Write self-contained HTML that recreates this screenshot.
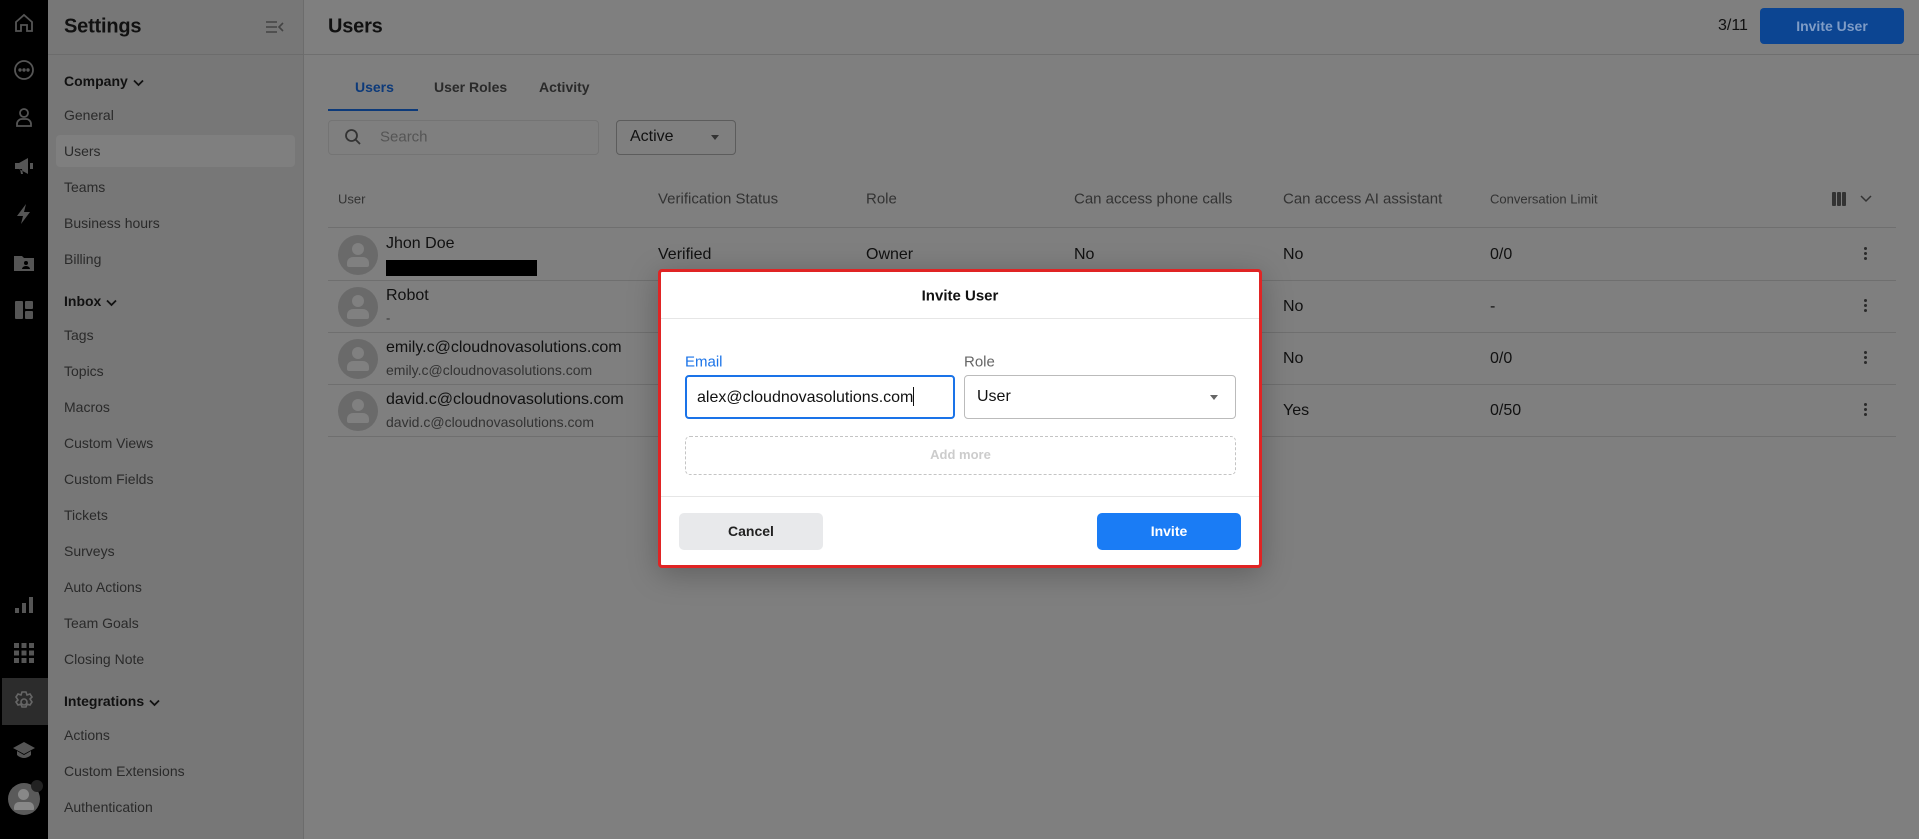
<!DOCTYPE html>
<html><head><meta charset="utf-8"><style>
*{box-sizing:border-box;margin:0;padding:0}
body{width:1919px;height:839px;overflow:hidden;font-family:"Liberation Sans",sans-serif;background:#7f7f7f;position:relative;color:#111}
.abs{position:absolute}
#rail{left:0;top:0;width:48px;height:839px;background:#000}
#side{left:48px;top:0;width:256px;height:839px;background:#777;border-right:1px solid #6c6c6c}
.it{position:absolute;left:16px;font-size:14px;color:#2a2a2a;transform:translateY(-50%)}
.hd{position:absolute;left:16px;font-size:14px;font-weight:bold;color:#111;transform:translateY(-50%)}
.hd svg{margin-left:5px;vertical-align:-1px}
.t{position:absolute;transform:translateY(-50%);white-space:nowrap}
.ic{position:absolute;left:12px;width:24px;height:24px}
.line{position:absolute;left:328px;width:1568px;height:1px;background:#6f6f6f}
.av{position:absolute;left:338px;width:40px;height:40px;border-radius:50%;background:#6a6a6a;overflow:hidden}
.av:before{content:"";position:absolute;left:14px;top:8px;width:12px;height:12px;border-radius:50%;background:#808080}
.av:after{content:"";position:absolute;left:9px;top:22px;width:22px;height:10px;border-radius:6px 6px 2px 2px;background:#808080}
.keb{position:absolute;left:1864px;width:4px}
.keb i{display:block;width:3px;height:3px;border-radius:50%;background:#2a2a2a;margin:0 0 2px}
</style></head><body>
<div id="rail" class="abs">
<svg class="ic" style="top:11px" viewBox="0 0 24 24" fill="none" stroke="#555" stroke-width="1.8"><path d="M4 11L12 4l8 7v9h-5v-6H9v6H4z"/></svg>
<svg class="ic" style="top:58px" viewBox="0 0 24 24" fill="none" stroke="#555" stroke-width="1.8"><circle cx="12" cy="12" r="9"/><circle cx="8" cy="12" r=".8" fill="#555"/><circle cx="12" cy="12" r=".8" fill="#555"/><circle cx="16" cy="12" r=".8" fill="#555"/></svg>
<svg class="ic" style="top:105px" viewBox="0 0 24 24" fill="none" stroke="#555" stroke-width="1.8"><circle cx="12" cy="8" r="4"/><path d="M5 21v-2a5 5 0 0 1 5-5h4a5 5 0 0 1 5 5v2z"/></svg>
<svg class="ic" style="top:154px" viewBox="0 0 24 24" fill="#555"><path d="M3 9h4l9-5v16l-9-5H3z M8 15l1 5h2l-1-5z M18 9h3v6h-3z"/></svg>
<svg class="ic" style="top:202px" viewBox="0 0 24 24" fill="#555"><path d="M14 2L5 14h6l-2 8 9-12h-6z"/></svg>
<svg class="ic" style="top:251px" viewBox="0 0 24 24" fill="#555"><path d="M2 5h8l2 2h10v13H2z"/><circle cx="14" cy="12" r="2" fill="#000"/><path d="M10 18a4 3 0 0 1 8 0z" fill="#000"/></svg>
<svg class="ic" style="top:298px" viewBox="0 0 24 24" fill="#555"><rect x="3" y="3" width="8" height="18" rx="1"/><rect x="13" y="3" width="8" height="8" rx="1"/><rect x="13" y="13" width="8" height="8" rx="1"/></svg>
<svg class="ic" style="top:593px" viewBox="0 0 24 24" fill="#555"><rect x="3" y="15" width="4" height="5"/><rect x="10" y="10" width="4" height="10"/><rect x="17" y="4" width="4" height="16"/></svg>
<svg class="ic" style="top:641px" viewBox="0 0 24 24" fill="#555"><rect x="2" y="2" width="5" height="5"/><rect x="9.5" y="2" width="5" height="5"/><rect x="17" y="2" width="5" height="5"/><rect x="2" y="9.5" width="5" height="5"/><rect x="9.5" y="9.5" width="5" height="5"/><rect x="17" y="9.5" width="5" height="5"/><rect x="2" y="17" width="5" height="5"/><rect x="9.5" y="17" width="5" height="5"/><rect x="17" y="17" width="5" height="5"/></svg>
<div class="abs" style="left:2px;top:678px;width:46px;height:47px;background:#2c2c2c"></div>
<svg class="ic" style="top:690px" viewBox="0 0 24 24" fill="none" stroke="#666" stroke-width="1.6"><path d="M10 2h4l1 3 3-1 2 3-2 2 2 3-2 3-3-1-1 3h-4l-1-3-3 1-2-3 2-2-2-3 2-3 3 1z"/><circle cx="12" cy="12" r="3"/></svg>
<svg class="ic" style="top:738px" viewBox="0 0 24 24" fill="#555"><path d="M12 4L1 10l11 6 11-6z M5 13v4c2 2 5 3 7 3s5-1 7-3v-4l-7 4z"/></svg>
<div class="abs" style="left:8px;top:783px;width:32px;height:32px;border-radius:50%;background:#5a5a5a"></div>
<div class="abs" style="left:18px;top:789px;width:11px;height:11px;border-radius:50%;background:#888"></div>
<div class="abs" style="left:14px;top:802px;width:20px;height:8px;border-radius:5px 5px 1px 1px;background:#888"></div>
<div class="abs" style="left:31px;top:780px;width:12px;height:12px;border-radius:50%;background:#222"></div>
</div>
<div id="side" class="abs">
<div class="t" style="left:16px;top:27px;font-size:20px;color:#111;font-weight:bold;letter-spacing:-.2px">Settings</div>
<svg class="abs" style="left:217px;top:19px" width="20" height="16" viewBox="0 0 20 16" fill="none" stroke="#444" stroke-width="1.6"><path d="M1 3h11M1 8h11M1 13h11M18 4l-4 4 4 4"/></svg>
<div class="abs" style="left:0;top:54px;width:256px;height:1px;background:#6c6c6c"></div>
<div class="abs" style="left:8px;top:135px;width:239px;height:32px;border-radius:4px;background:#7f7f7f"></div>
<div class="hd" style="top:81px">Company<svg width="11" height="8" viewBox="0 0 11 8" fill="none" stroke="#111" stroke-width="1.8"><path d="M1 1.5l4.5 4.5 4.5-4.5"/></svg></div>
<div class="it" style="top:115px">General</div>
<div class="it" style="top:151px">Users</div>
<div class="it" style="top:187px">Teams</div>
<div class="it" style="top:223px">Business hours</div>
<div class="it" style="top:259px">Billing</div>
<div class="hd" style="top:301px">Inbox<svg width="11" height="8" viewBox="0 0 11 8" fill="none" stroke="#111" stroke-width="1.8"><path d="M1 1.5l4.5 4.5 4.5-4.5"/></svg></div>
<div class="it" style="top:335px">Tags</div>
<div class="it" style="top:371px">Topics</div>
<div class="it" style="top:407px">Macros</div>
<div class="it" style="top:443px">Custom Views</div>
<div class="it" style="top:479px">Custom Fields</div>
<div class="it" style="top:515px">Tickets</div>
<div class="it" style="top:551px">Surveys</div>
<div class="it" style="top:587px">Auto Actions</div>
<div class="it" style="top:623px">Team Goals</div>
<div class="it" style="top:659px">Closing Note</div>
<div class="hd" style="top:701px">Integrations<svg width="11" height="8" viewBox="0 0 11 8" fill="none" stroke="#111" stroke-width="1.8"><path d="M1 1.5l4.5 4.5 4.5-4.5"/></svg></div>
<div class="it" style="top:735px">Actions</div>
<div class="it" style="top:771px">Custom Extensions</div>
<div class="it" style="top:807px">Authentication</div>
</div>
<!-- main -->
<div class="t" style="left:328px;top:27px;font-size:20px;color:#111;font-weight:bold;letter-spacing:-.2px">Users</div>
<div class="abs" style="left:304px;top:54px;width:1615px;height:1px;background:#6f6f6f"></div>
<div class="t" style="left:1718px;top:26px;font-size:16px;color:#111">3/11</div>
<div class="abs" style="left:1760px;top:8px;width:144px;height:36px;border-radius:4px;background:#0c4592;color:#7f9cc6;font-size:14px;font-weight:bold;text-align:center;line-height:36px">Invite User</div>
<div class="t" style="left:355px;top:87px;font-size:14px;font-weight:bold;color:#0d3a7a">Users</div>
<div class="t" style="left:434px;top:87px;font-size:14px;font-weight:bold;color:#2a2a2a">User Roles</div>
<div class="t" style="left:539px;top:87px;font-size:14px;font-weight:bold;color:#2a2a2a">Activity</div>
<div class="abs" style="left:328px;top:109px;width:90px;height:2px;background:#0d3a7a"></div>
<div class="abs" style="left:328px;top:120px;width:271px;height:35px;border:1px solid #747474;border-radius:4px"></div>
<svg class="abs" style="left:344px;top:128px" width="18" height="18" viewBox="0 0 18 18" fill="none" stroke="#333" stroke-width="1.8"><circle cx="7.5" cy="7.5" r="5.5"/><path d="M11.5 11.5L16 16"/></svg>
<div class="t" style="left:380px;top:137px;font-size:15px;color:#555">Search</div>
<div class="abs" style="left:616px;top:120px;width:120px;height:35px;border:1px solid #5c5c5c;border-radius:4px"></div>
<div class="t" style="left:630px;top:137px;font-size:16px;color:#111">Active</div>
<div class="abs" style="left:711px;top:135px;border:4.5px solid transparent;border-top:5px solid #333"></div>
<div class="t" style="left:338px;top:199px;font-size:13px;color:#333">User</div>
<div class="t" style="left:658px;top:199px;font-size:15px;color:#333">Verification Status</div>
<div class="t" style="left:866px;top:199px;font-size:15px;color:#333">Role</div>
<div class="t" style="left:1074px;top:199px;font-size:15px;color:#333">Can access phone calls</div>
<div class="t" style="left:1283px;top:199px;font-size:15px;color:#333">Can access AI assistant</div>
<div class="t" style="left:1490px;top:199px;font-size:13px;color:#333">Conversation Limit</div>
<svg class="abs" style="left:1832px;top:191px" width="14" height="16" viewBox="0 0 14 16" fill="#333"><rect x="0" y="1" width="4" height="14" rx="1"/><rect x="5" y="1" width="4" height="14" rx="1"/><rect x="10" y="1" width="4" height="14" rx="1"/></svg>
<svg class="abs" style="left:1860px;top:195px" width="12" height="8" viewBox="0 0 12 8" fill="none" stroke="#333" stroke-width="1.5"><path d="M1 1l5 5 5-5"/></svg>
<div class="line" style="top:227px"></div><div class="line" style="top:280px"></div><div class="line" style="top:332px"></div><div class="line" style="top:384px"></div><div class="line" style="top:436px"></div>
<div class="av" style="top:235px"></div><div class="av" style="top:287px"></div><div class="av" style="top:339px"></div><div class="av" style="top:391px"></div>
<div class="t" style="left:386px;top:244px;font-size:16px">Jhon Doe</div>
<div class="abs" style="left:386px;top:260px;width:151px;height:16px;background:#000"></div>
<div class="t" style="left:386px;top:296px;font-size:16px">Robot</div>
<div class="t" style="left:386px;top:318px;font-size:13px;color:#333">-</div>
<div class="t" style="left:386px;top:348px;font-size:16px">emily.c@cloudnovasolutions.com</div>
<div class="t" style="left:386px;top:370px;font-size:14px;color:#333">emily.c@cloudnovasolutions.com</div>
<div class="t" style="left:386px;top:400px;font-size:16px">david.c@cloudnovasolutions.com</div>
<div class="t" style="left:386px;top:422px;font-size:14px;color:#333">david.c@cloudnovasolutions.com</div>
<div class="t" style="left:658px;top:255px;font-size:16px">Verified</div>
<div class="t" style="left:866px;top:255px;font-size:16px">Owner</div>
<div class="t" style="left:1074px;top:255px;font-size:16px">No</div>
<div class="t" style="left:1283px;top:255px;font-size:16px">No</div>
<div class="t" style="left:1283px;top:307px;font-size:16px">No</div>
<div class="t" style="left:1283px;top:359px;font-size:16px">No</div>
<div class="t" style="left:1283px;top:411px;font-size:16px">Yes</div>
<div class="t" style="left:1490px;top:255px;font-size:16px">0/0</div>
<div class="t" style="left:1490px;top:307px;font-size:16px">-</div>
<div class="t" style="left:1490px;top:359px;font-size:16px">0/0</div>
<div class="t" style="left:1490px;top:411px;font-size:16px">0/50</div>
<div class="keb" style="top:247px"><i></i><i></i><i></i></div>
<div class="keb" style="top:299px"><i></i><i></i><i></i></div>
<div class="keb" style="top:351px"><i></i><i></i><i></i></div>
<div class="keb" style="top:403px"><i></i><i></i><i></i></div>
<!-- modal -->
<div class="abs" style="left:658px;top:269px;width:604px;height:299px;border:3px solid #e02424;background:#fff;border-radius:4px;box-shadow:0 6px 30px rgba(0,0,0,.25)"></div>
<div class="t" style="left:658px;width:604px;text-align:center;top:296px;font-size:15px;font-weight:bold;color:#111">Invite User</div>
<div class="abs" style="left:661px;top:318px;width:598px;height:1px;background:#e6e6e6"></div>
<div class="t" style="left:685px;top:362px;font-size:15px;color:#1a73e8">Email</div>
<div class="t" style="left:964px;top:362px;font-size:15px;color:#666">Role</div>
<div class="abs" style="left:685px;top:375px;width:270px;height:44px;border:2px solid #1a73e8;border-radius:4px"></div>
<div class="t" style="left:697px;top:397px;font-size:16px;color:#111">alex@cloudnovasolutions.com<span style="display:inline-block;width:1px;height:19px;background:#111;vertical-align:-4px"></span></div>
<div class="abs" style="left:964px;top:375px;width:272px;height:44px;border:1px solid #bbb;border-radius:4px"></div>
<div class="t" style="left:977px;top:397px;font-size:16px;color:#111">User</div>
<div class="abs" style="left:1210px;top:395px;border:4.5px solid transparent;border-top:5px solid #666"></div>
<div class="abs" style="left:685px;top:436px;width:551px;height:39px;border:1.5px dashed #c4c4c4;border-radius:5px;text-align:center;line-height:36px;font-size:13px;font-weight:bold;color:#ccc">Add more</div>
<div class="abs" style="left:661px;top:496px;width:598px;height:1px;background:#e6e6e6"></div>
<div class="abs" style="left:679px;top:513px;width:144px;height:37px;border-radius:5px;background:#e8e9eb;text-align:center;line-height:37px;font-size:14px;font-weight:bold;color:#222">Cancel</div>
<div class="abs" style="left:1097px;top:513px;width:144px;height:37px;border-radius:5px;background:#1a7cf5;text-align:center;line-height:37px;font-size:14px;font-weight:bold;color:#fff">Invite</div>
</body></html>
